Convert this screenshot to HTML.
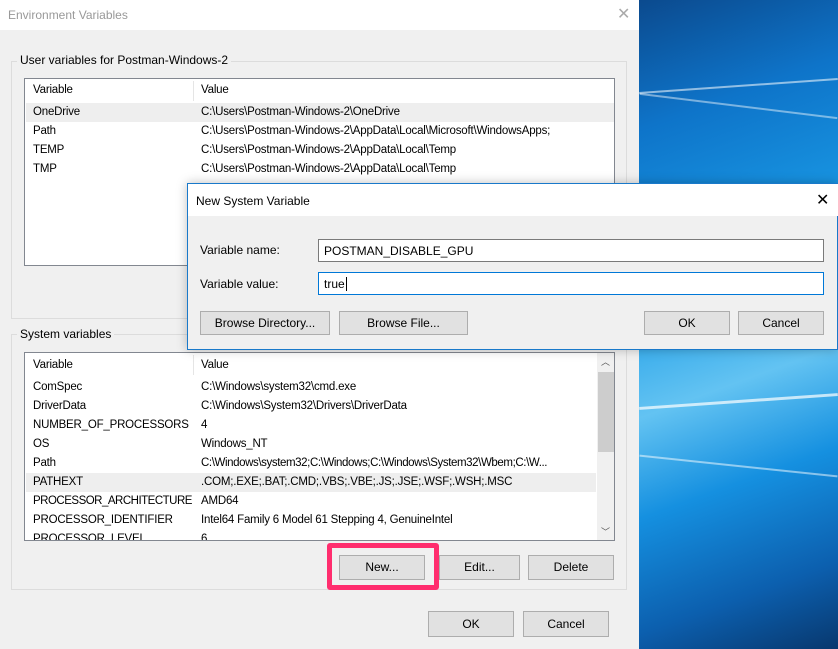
<!DOCTYPE html>
<html><head><meta charset="utf-8"><style>
*{box-sizing:border-box;margin:0;padding:0}
body{width:838px;height:649px;overflow:hidden;position:relative;font-family:"Liberation Sans",sans-serif;font-size:12px;color:#000;background:#0a78d7}
.a{position:absolute}
.desk{left:639px;top:0;width:199px;height:649px;background:
linear-gradient(160deg,#0b4a8e 0%,#0e74c9 18%,#1a9be6 40%,#63c3f2 58%,#1590e0 72%,#0c5fae 88%,#08386e 100%)}
.win{left:0;top:0;width:639px;height:649px;background:#f0f0f0}
.title{left:0;top:0;width:639px;height:30px;background:#fff}
.grp{border:1px solid #dcdcdc}
.lbl{background:#f0f0f0;padding:0 3px}
.list{background:#fff;border:1px solid #828790;overflow:hidden;font-size:11.5px;letter-spacing:-0.2px}
.row{position:absolute;left:1px;height:19px;line-height:19px;width:100%}
.row span{position:absolute;white-space:nowrap}
.btn{position:absolute;background:#e1e1e1;border:1px solid #adadad;text-align:center;font-size:12px}
.inp{position:absolute;background:#fff;border:1px solid #7a7a7a;padding-left:5px;line-height:22px}
</style></head><body>
<div class="a desk"></div>
<div class="a" style="left:639px;top:85px;width:199px;height:2px;background:rgba(255,255,255,.55);transform:rotate(-4deg)"></div>
<div class="a" style="left:639px;top:105px;width:199px;height:2px;background:rgba(255,255,255,.45);transform:rotate(7deg)"></div>
<div class="a" style="left:639px;top:400px;width:199px;height:3px;background:rgba(255,255,255,.7);transform:rotate(-4deg)"></div>
<div class="a" style="left:639px;top:465px;width:199px;height:2px;background:rgba(255,255,255,.5);transform:rotate(6deg)"></div>
<div class="a win"></div>
<div class="a title"></div>
<div class="a" style="left:8px;top:8px;color:#999;font-size:12px">Environment Variables</div>
<div class="a" style="left:617px;top:4px;color:#aaa;font-size:16px">✕</div>

<div class="a grp" style="left:11px;top:61px;width:616px;height:258px"></div>
<div class="a lbl" style="left:17px;top:53px">User variables for Postman-Windows-2</div>
<div class="a list" style="left:24px;top:78px;width:591px;height:188px">
 <div class="a" style="left:168px;top:2px;width:1px;height:20px;background:#e5e5e5"></div>
 <div class="row" style="top:2px"><span style="left:7px">Variable</span><span style="left:175px">Value</span></div>
 <div class="row" style="top:24px;background:#eeeeee"><span style="left:7px">OneDrive</span><span style="left:175px">C:\Users\Postman-Windows-2\OneDrive</span></div>
 <div class="row" style="top:43px"><span style="left:7px">Path</span><span style="left:175px">C:\Users\Postman-Windows-2\AppData\Local\Microsoft\WindowsApps;</span></div>
 <div class="row" style="top:62px"><span style="left:7px">TEMP</span><span style="left:175px">C:\Users\Postman-Windows-2\AppData\Local\Temp</span></div>
 <div class="row" style="top:81px"><span style="left:7px">TMP</span><span style="left:175px">C:\Users\Postman-Windows-2\AppData\Local\Temp</span></div>
</div>

<div class="a grp" style="left:11px;top:334px;width:616px;height:256px"></div>
<div class="a lbl" style="left:17px;top:327px">System variables</div>
<div class="a list" style="left:24px;top:352px;width:591px;height:189px">
 <div class="a" style="left:168px;top:2px;width:1px;height:20px;background:#e5e5e5"></div>
 <div class="a" style="left:572px;top:0;width:18px;height:188px;background:#f0f0f0"></div>
 <div class="a" style="left:573px;top:19px;width:16px;height:80px;background:#cdcdcd"></div>
 <div class="a" style="left:576px;top:2px;font-size:9px;color:#555">︿</div>
 <div class="a" style="left:576px;top:172px;font-size:9px;color:#555">﹀</div>
 <div class="row" style="top:3px"><span style="left:7px">Variable</span><span style="left:175px">Value</span></div>
 <div class="row" style="top:25px"><span style="left:7px">ComSpec</span><span style="left:175px">C:\Windows\system32\cmd.exe</span></div>
 <div class="row" style="top:44px"><span style="left:7px">DriverData</span><span style="left:175px">C:\Windows\System32\Drivers\DriverData</span></div>
 <div class="row" style="top:63px"><span style="left:7px">NUMBER_OF_PROCESSORS</span><span style="left:175px">4</span></div>
 <div class="row" style="top:82px"><span style="left:7px">OS</span><span style="left:175px">Windows_NT</span></div>
 <div class="row" style="top:101px;width:570px"><span style="left:7px">Path</span><span style="left:175px;letter-spacing:-.4px">C:\Windows\system32;C:\Windows;C:\Windows\System32\Wbem;C:\W...</span></div>
 <div class="row" style="top:120px;width:570px;background:#eeeeee"><span style="left:7px">PATHEXT</span><span style="left:175px">.COM;.EXE;.BAT;.CMD;.VBS;.VBE;.JS;.JSE;.WSF;.WSH;.MSC</span></div>
 <div class="row" style="top:139px"><span style="left:7px;letter-spacing:-.5px">PROCESSOR_ARCHITECTURE</span><span style="left:175px">AMD64</span></div>
 <div class="row" style="top:158px"><span style="left:7px">PROCESSOR_IDENTIFIER</span><span style="left:175px">Intel64 Family 6 Model 61 Stepping 4, GenuineIntel</span></div>
 <div class="row" style="top:177px"><span style="left:7px">PROCESSOR_LEVEL</span><span style="left:175px">6</span></div>
</div>
<div class="a" style="left:327px;top:543px;width:112px;height:47px;border:5px solid #ff2d6e;border-radius:3px"></div>
<div class="btn" style="left:339px;top:555px;width:86px;height:25px;line-height:23px">New...</div>
<div class="btn" style="left:439px;top:555px;width:81px;height:25px;line-height:23px">Edit...</div>
<div class="btn" style="left:528px;top:555px;width:86px;height:25px;line-height:23px">Delete</div>
<div class="btn" style="left:428px;top:611px;width:86px;height:26px;line-height:24px">OK</div>
<div class="btn" style="left:523px;top:611px;width:86px;height:26px;line-height:24px">Cancel</div>

<div class="a" style="left:187px;top:183px;width:651px;height:167px;background:#f0f0f0;border:1px solid #1979ca;box-shadow:0 0 10px rgba(0,0,0,.25)">
 <div class="a" style="left:0;top:0;width:650px;height:32px;background:#fff"></div>
 <div class="a" style="left:8px;top:10px">New System Variable</div>
 <div class="a" style="left:628px;top:6px;font-size:16px">✕</div>
 <div class="a" style="left:12px;top:59px">Variable name:</div>
 <div class="a" style="left:12px;top:93px">Variable value:</div>
 <div class="inp" style="left:130px;top:55px;width:506px;height:23px">POSTMAN_DISABLE_GPU</div>
 <div class="inp" style="left:130px;top:88px;width:506px;height:23px;border-color:#0078d7">true<span style="border-left:1px solid #000;margin-left:1px"></span></div>
 <div class="btn" style="left:12px;top:127px;width:130px;height:24px;line-height:22px">Browse Directory...</div>
 <div class="btn" style="left:151px;top:127px;width:129px;height:24px;line-height:22px">Browse File...</div>
 <div class="btn" style="left:456px;top:127px;width:86px;height:24px;line-height:22px">OK</div>
 <div class="btn" style="left:550px;top:127px;width:86px;height:24px;line-height:22px">Cancel</div>
</div>
</body></html>
